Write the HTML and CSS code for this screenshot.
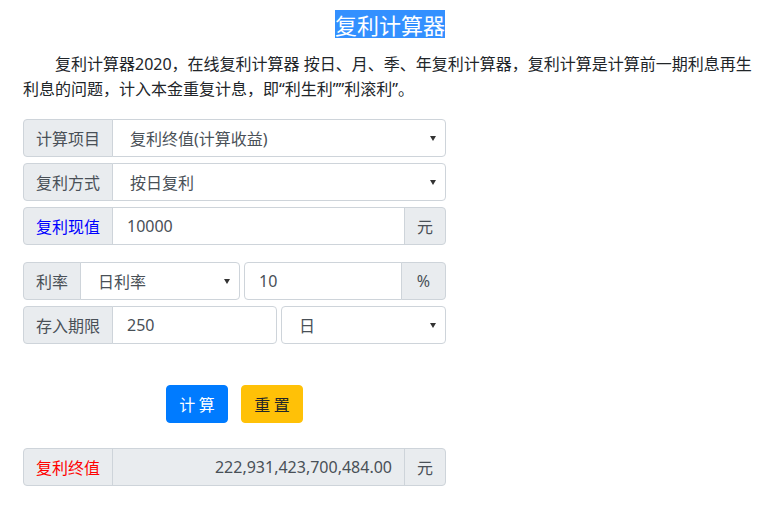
FILE: index.html
```html
<!DOCTYPE html>
<html lang="zh-CN">
<head>
<meta charset="utf-8">
<title>复利计算器</title>
<link rel="stylesheet" href="styles.css">
</head>
<body>
<div class="container">
  <h1 class="title"><span class="title-sel">复利计算器</span></h1>
  <p class="intro">复利计算器2020，在线复利计算器 按日、月、季、年复利计算器，复利计算是计算前一期利息再生利息的问题，计入本金重复计息，即“利生利””利滚利”。</p>

  <form class="calc">
    <div class="group">
      <span class="addon">计算项目</span>
      <div class="select grow"><span>复利终值(计算收益)</span></div>
    </div>
    <div class="group">
      <span class="addon">复利方式</span>
      <div class="select grow"><span>按日复利</span></div>
    </div>
    <div class="group">
      <span class="addon blue">复利现值</span>
      <div class="field grow">10000</div>
      <span class="addon unit">元</span>
    </div>

    <div class="group split first-split">
      <div class="sub sub-rate">
        <span class="addon">利率</span>
        <div class="select grow"><span>日利率</span></div>
      </div>
      <div class="sub sub-pct">
        <div class="field grow">10</div>
        <span class="addon pct">%</span>
      </div>
    </div>
    <div class="group split">
      <div class="sub sub-term">
        <span class="addon">存入期限</span>
        <div class="field grow">250</div>
      </div>
      <div class="sub sub-unit">
        <div class="select grow"><span>日</span></div>
      </div>
    </div>

    <div class="buttons">
      <button type="button" class="btn btn-blue">计 算</button>
      <button type="button" class="btn btn-yellow">重 置</button>
    </div>

    <div class="group result">
      <span class="addon red">复利终值</span>
      <div class="field grow readonly">222,931,423,700,484.00</div>
      <span class="addon unit">元</span>
    </div>
  </form>
</div>
</body>
</html>
```

FILE: styles.css
```css
* { box-sizing: border-box; }

body {
  margin: 0;
  font-family: "Noto Sans", "Noto Sans CJK SC", sans-serif;
  font-size: 16px;
  color: #212529;
  background: #fff;
}

.container {
  padding: 10px 8px 0 23px;
}

.title {
  margin: 0;
  text-align: center;
  font-size: 22px;
  font-weight: normal;
  line-height: 28px;
  height: 28px;
  padding-left: 0;
}

.title-sel {
  display: inline-block;
  background: #3390ff;
  color: #fff;
  height: 28px;
  line-height: 28px;
  font-family: "Noto Sans CJK SC", sans-serif;
}

.intro {
  margin: 14px 0 17px 0;
  line-height: 25px;
  text-indent: 2em;
  color: #212529;
}

.calc {
  width: 423px;
}

.group {
  display: flex;
  height: 38px;
  margin-bottom: 6px;
}

.addon {
  display: flex;
  align-items: center;
  padding: 0 12px;
  background: #e9ecef;
  border: 1px solid #ced4da;
  color: #495057;
  white-space: nowrap;
}

.group > .addon:first-child,
.sub > :first-child {
  border-radius: 4px 0 0 4px;
}

.group > :last-child,
.sub > :last-child {
  border-radius: 0 4px 4px 0;
}

.sub > :only-child {
  border-radius: 4px;
}

.grow { flex: 1; min-width: 0; }

.field,
.select {
  position: relative;
  display: flex;
  align-items: center;
  border: 1px solid #ced4da;
  margin-left: -1px;
  background: #fff;
  color: #495057;
  padding: 0 12px 0 14px;
}

.select {
  padding-left: 17px;
}

.select::after {
  content: "";
  position: absolute;
  right: 9px;
  top: 50%;
  margin-top: -2px;
  border-left: 3px solid transparent;
  border-right: 3px solid transparent;
  border-top: 5px solid #333;
}

.addon.unit {
  margin-left: -1px;
  width: 42px;
  justify-content: center;
}

.addon.pct {
  margin-left: -1px;
  width: 45px;
  justify-content: center;
}

.blue { color: #0000ff; }
.red { color: #ff0000; }

.first-split { margin-top: 17px; }

.split { gap: 4px; }

.sub {
  display: flex;
  height: 38px;
}

.sub-rate { width: 217px; }
.sub-rate .addon { width: 58px; }
.sub-pct { flex: 1; }
.sub-pct .field { margin-left: 0; }

.sub-term { width: 254px; }
.sub-unit { flex: 1; }
.sub-unit .select { margin-left: 0; }

.buttons {
  display: flex;
  justify-content: center;
  gap: 13px;
  margin: 41px 0 25px;
}

.btn {
  height: 38px;
  width: 62px;
  border: 1px solid transparent;
  border-radius: 4px;
  font-family: "Noto Sans CJK SC", sans-serif;
  font-size: 16px;
  padding: 0;
  cursor: pointer;
}

.btn-blue {
  background: #007bff;
  border-color: #007bff;
  color: #fff;
}

.btn-yellow {
  background: #ffc107;
  border-color: #ffc107;
  color: #212529;
}

.readonly {
  background: #e9ecef;
  justify-content: flex-end;
  padding-right: 12px;
}
```
